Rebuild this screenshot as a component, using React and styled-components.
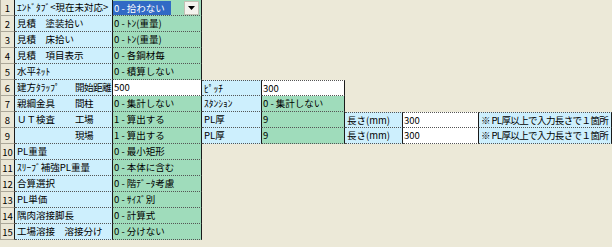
import React from 'react';
import styled, { createGlobalStyle, css } from 'styled-components';

const GlobalStyle = createGlobalStyle`
  body {
    margin: 0;
    background: #ece9d8;
    font-family: "Noto Sans CJK JP", "Noto Sans", sans-serif;
    font-size: 9.5px;
    color: #000;
  }
`;

const W = { num: 15, label: 98, value: 89, label2: 60, value2: 83, label3: 58, value3: 76, note: 133 };

const NOTE = '※ PL厚以上で入力長さで１箇所';

const rows = [
  { label: 'ｴﾝﾄﾞﾀﾌﾞ<現在未対応>', combo: '0 - 拾わない' },
  { label: '見積　塗装拾い', value: '0 - ﾄﾝ(重量)' },
  { label: '見積　床拾い', value: '0 - ﾄﾝ(重量)' },
  { label: '見積　項目表示', value: '0 - 各鋼材毎' },
  { label: '水平ﾈｯﾄ', value: '0 - 積算しない' },
  {
    label: '建方ﾀﾗｯﾌﾟ', sub: '開始距離', input: '500',
    extra: [
      { kind: 'label', w: W.label2, text: 'ﾋﾟｯﾁ', top: true },
      { kind: 'input', w: W.value2, text: '300', top: true },
    ],
  },
  {
    label: '親綱金具', sub: '間柱', value: '0 - 集計しない',
    extra: [
      { kind: 'label', w: W.label2, text: 'ｽﾀﾝｼｮﾝ' },
      { kind: 'value', w: W.value2, text: '0 - 集計しない' },
    ],
  },
  {
    label: 'ＵＴ検査', sub: '工場', value: '1 - 算出する',
    extra: [
      { kind: 'label', w: W.label2, text: 'PL厚' },
      { kind: 'value', w: W.value2, text: '9' },
      { kind: 'label', w: W.label3, text: '長さ(mm)', top: true },
      { kind: 'input', w: W.value3, text: '300', top: true },
      { kind: 'label', w: W.note, text: NOTE, top: true, tight: true },
    ],
  },
  {
    label: '', sub: '現場', value: '1 - 算出する',
    extra: [
      { kind: 'label', w: W.label2, text: 'PL厚' },
      { kind: 'value', w: W.value2, text: '9' },
      { kind: 'label', w: W.label3, text: '長さ(mm)' },
      { kind: 'input', w: W.value3, text: '300' },
      { kind: 'label', w: W.note, text: NOTE, tight: true },
    ],
  },
  { label: 'PL重量', value: '0 - 最小矩形' },
  { label: 'ｽﾘｰﾌﾞ補強PL重量', value: '0 - 本体に含む' },
  { label: '合算選択', value: '0 - 階ﾃﾞｰﾀ考慮' },
  { label: 'PL単価', value: '0 - ｻｲｽﾞ別' },
  { label: '隅肉溶接脚長', value: '0 - 計算式' },
  { label: '工場溶接　溶接分け', value: '0 - 分けない' },
];

const bg = {
  label: '#cdeffd',
  value: '#9fdcbb',
  input: '#ffffff',
};

function Grid() {
  return (
    <Sheet>
      {rows.map((r, i) => (
        <Row key={i}>
          <NumCell>{i + 1}</NumCell>
          <Cell $kind="label" $w={W.label}>
            {r.sub !== undefined ? (
              <>
                <LabelMain>{r.label}</LabelMain>
                <LabelSub>{r.sub}</LabelSub>
              </>
            ) : (
              r.label
            )}
          </Cell>
          {r.combo ? (
            <Cell $kind="value" $w={W.value}>
              <Combo>
                <Selected>{r.combo}</Selected>
                <DropButton>
                  <svg width="7" height="4" viewBox="0 0 7 4">
                    <path d="M0 0h7L3.5 4z" fill="#000" />
                  </svg>
                </DropButton>
              </Combo>
            </Cell>
          ) : (
            <Cell $kind={r.input ? 'input' : 'value'} $w={W.value}>
              {r.input || r.value}
            </Cell>
          )}
          {r.extra && r.extra.map((c, j) => (
            <Cell key={j} $kind={c.kind} $w={c.w} $top={c.top} $tight={c.tight}>
              {c.text}
            </Cell>
          ))}
        </Row>
      ))}
    </Sheet>
  );
}

export default function App() {
  return (
    <>
      <GlobalStyle />
      <Grid />
    </>
  );
}

const Sheet = styled.div`
  display: flex;
  flex-direction: column;
  width: 612px;
`;

const Row = styled.div`
  display: flex;
  height: 16px;
`;

const NumCell = styled.div`
  box-sizing: border-box;
  width: ${W.num}px;
  flex: none;
  height: 16px;
  display: flex;
  align-items: center;
  justify-content: center;
  background: #ebe7d6;
  border-left: 1px solid #aca899;
  border-bottom: 1px solid #aca899;
  border-right: 1px solid #1a1a1a;
`;

const Cell = styled.div`
  box-sizing: border-box;
  width: ${(p) => p.$w}px;
  flex: none;
  height: 16px;
  display: flex;
  align-items: center;
  padding-left: ${(p) => (p.$kind === 'label' ? 2 : 1)}px;
  white-space: pre;
  overflow: hidden;
  line-height: 15px;
  letter-spacing: ${(p) => (p.$tight ? '-0.6px' : 'normal')};
  background: ${(p) => bg[p.$kind]};
  border-bottom: 1px dotted #555;
  border-right: 1px solid #1a1a1a;
  ${(p) =>
    p.$top &&
    css`
      border-top: 1px dotted #555;
    `}
`;

const LabelMain = styled.span`
  flex: none;
  width: 58px;
`;

const LabelSub = styled.span`
  letter-spacing: -0.5px;
`;

const Combo = styled.div`
  display: flex;
  align-items: center;
  width: 100%;
  height: 15px;
  margin-left: -1px;
`;

const Selected = styled.span`
  background: #316ac5;
  color: #fff;
  padding: 0 6px 0 1px;
  line-height: 14px;
`;

const DropButton = styled.div`
  box-sizing: border-box;
  margin-left: auto;
  margin-right: 1px;
  width: 15px;
  height: 14px;
  display: flex;
  align-items: center;
  justify-content: center;
  background: #f4f3ee;
  border: 1px solid #c2c0b4;
`;
